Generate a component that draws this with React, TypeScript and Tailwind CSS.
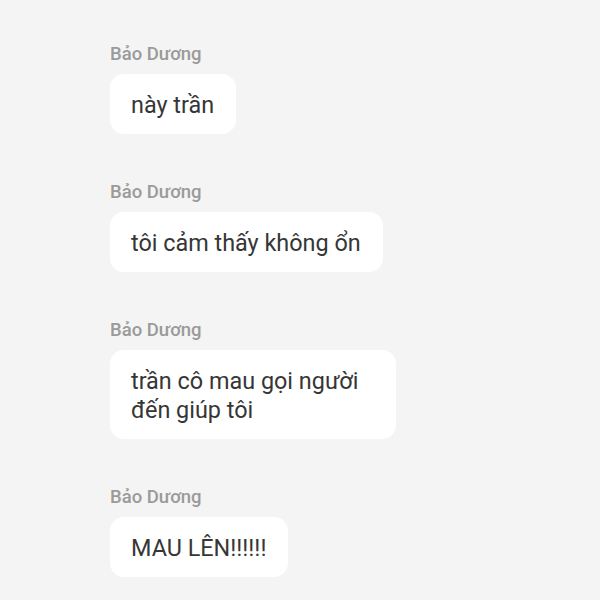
const messages = [
  { id: 1, author: "Bảo Dương", lines: ["này trần"], width: "" },
  { id: 2, author: "Bảo Dương", lines: ["tôi cảm thấy không ổn"], width: "" },
  { id: 3, author: "Bảo Dương", lines: ["trần cô mau gọi người", "đến giúp tôi"], width: "w-[286px]" },
  { id: 4, author: "Bảo Dương", lines: ["MAU LÊN!!!!!!"], width: "" },
];

const MessageItem = ({
  author,
  lines,
  width,
}: {
  author: string;
  lines: string[];
  width: string;
}) => {
  return (
    <div className="flex flex-col items-start">
      <p className="text-[18.5px] leading-[24px] font-medium text-[#9a9a9a]">{author}</p>
      <div
        className={`mt-[8px] rounded-[14px] bg-white pl-[21px] pr-[22px] pt-[17px] pb-[14px] text-[23.4px] leading-[29px] text-[#363636] ${width}`}
      >
        {lines.map((line) => (
          <div key={line}>{line}</div>
        ))}
      </div>
    </div>
  );
};

export default function App() {
  return (
    <div className="h-[600px] w-[600px] overflow-hidden bg-[#f4f4f4] font-['Roboto',sans-serif]">
      <div className="flex flex-col gap-[46px] pl-[110px] pt-[42px]">
        {messages.map((m) => (
          <MessageItem key={m.id} author={m.author} lines={m.lines} width={m.width} />
        ))}
      </div>
    </div>
  );
}
